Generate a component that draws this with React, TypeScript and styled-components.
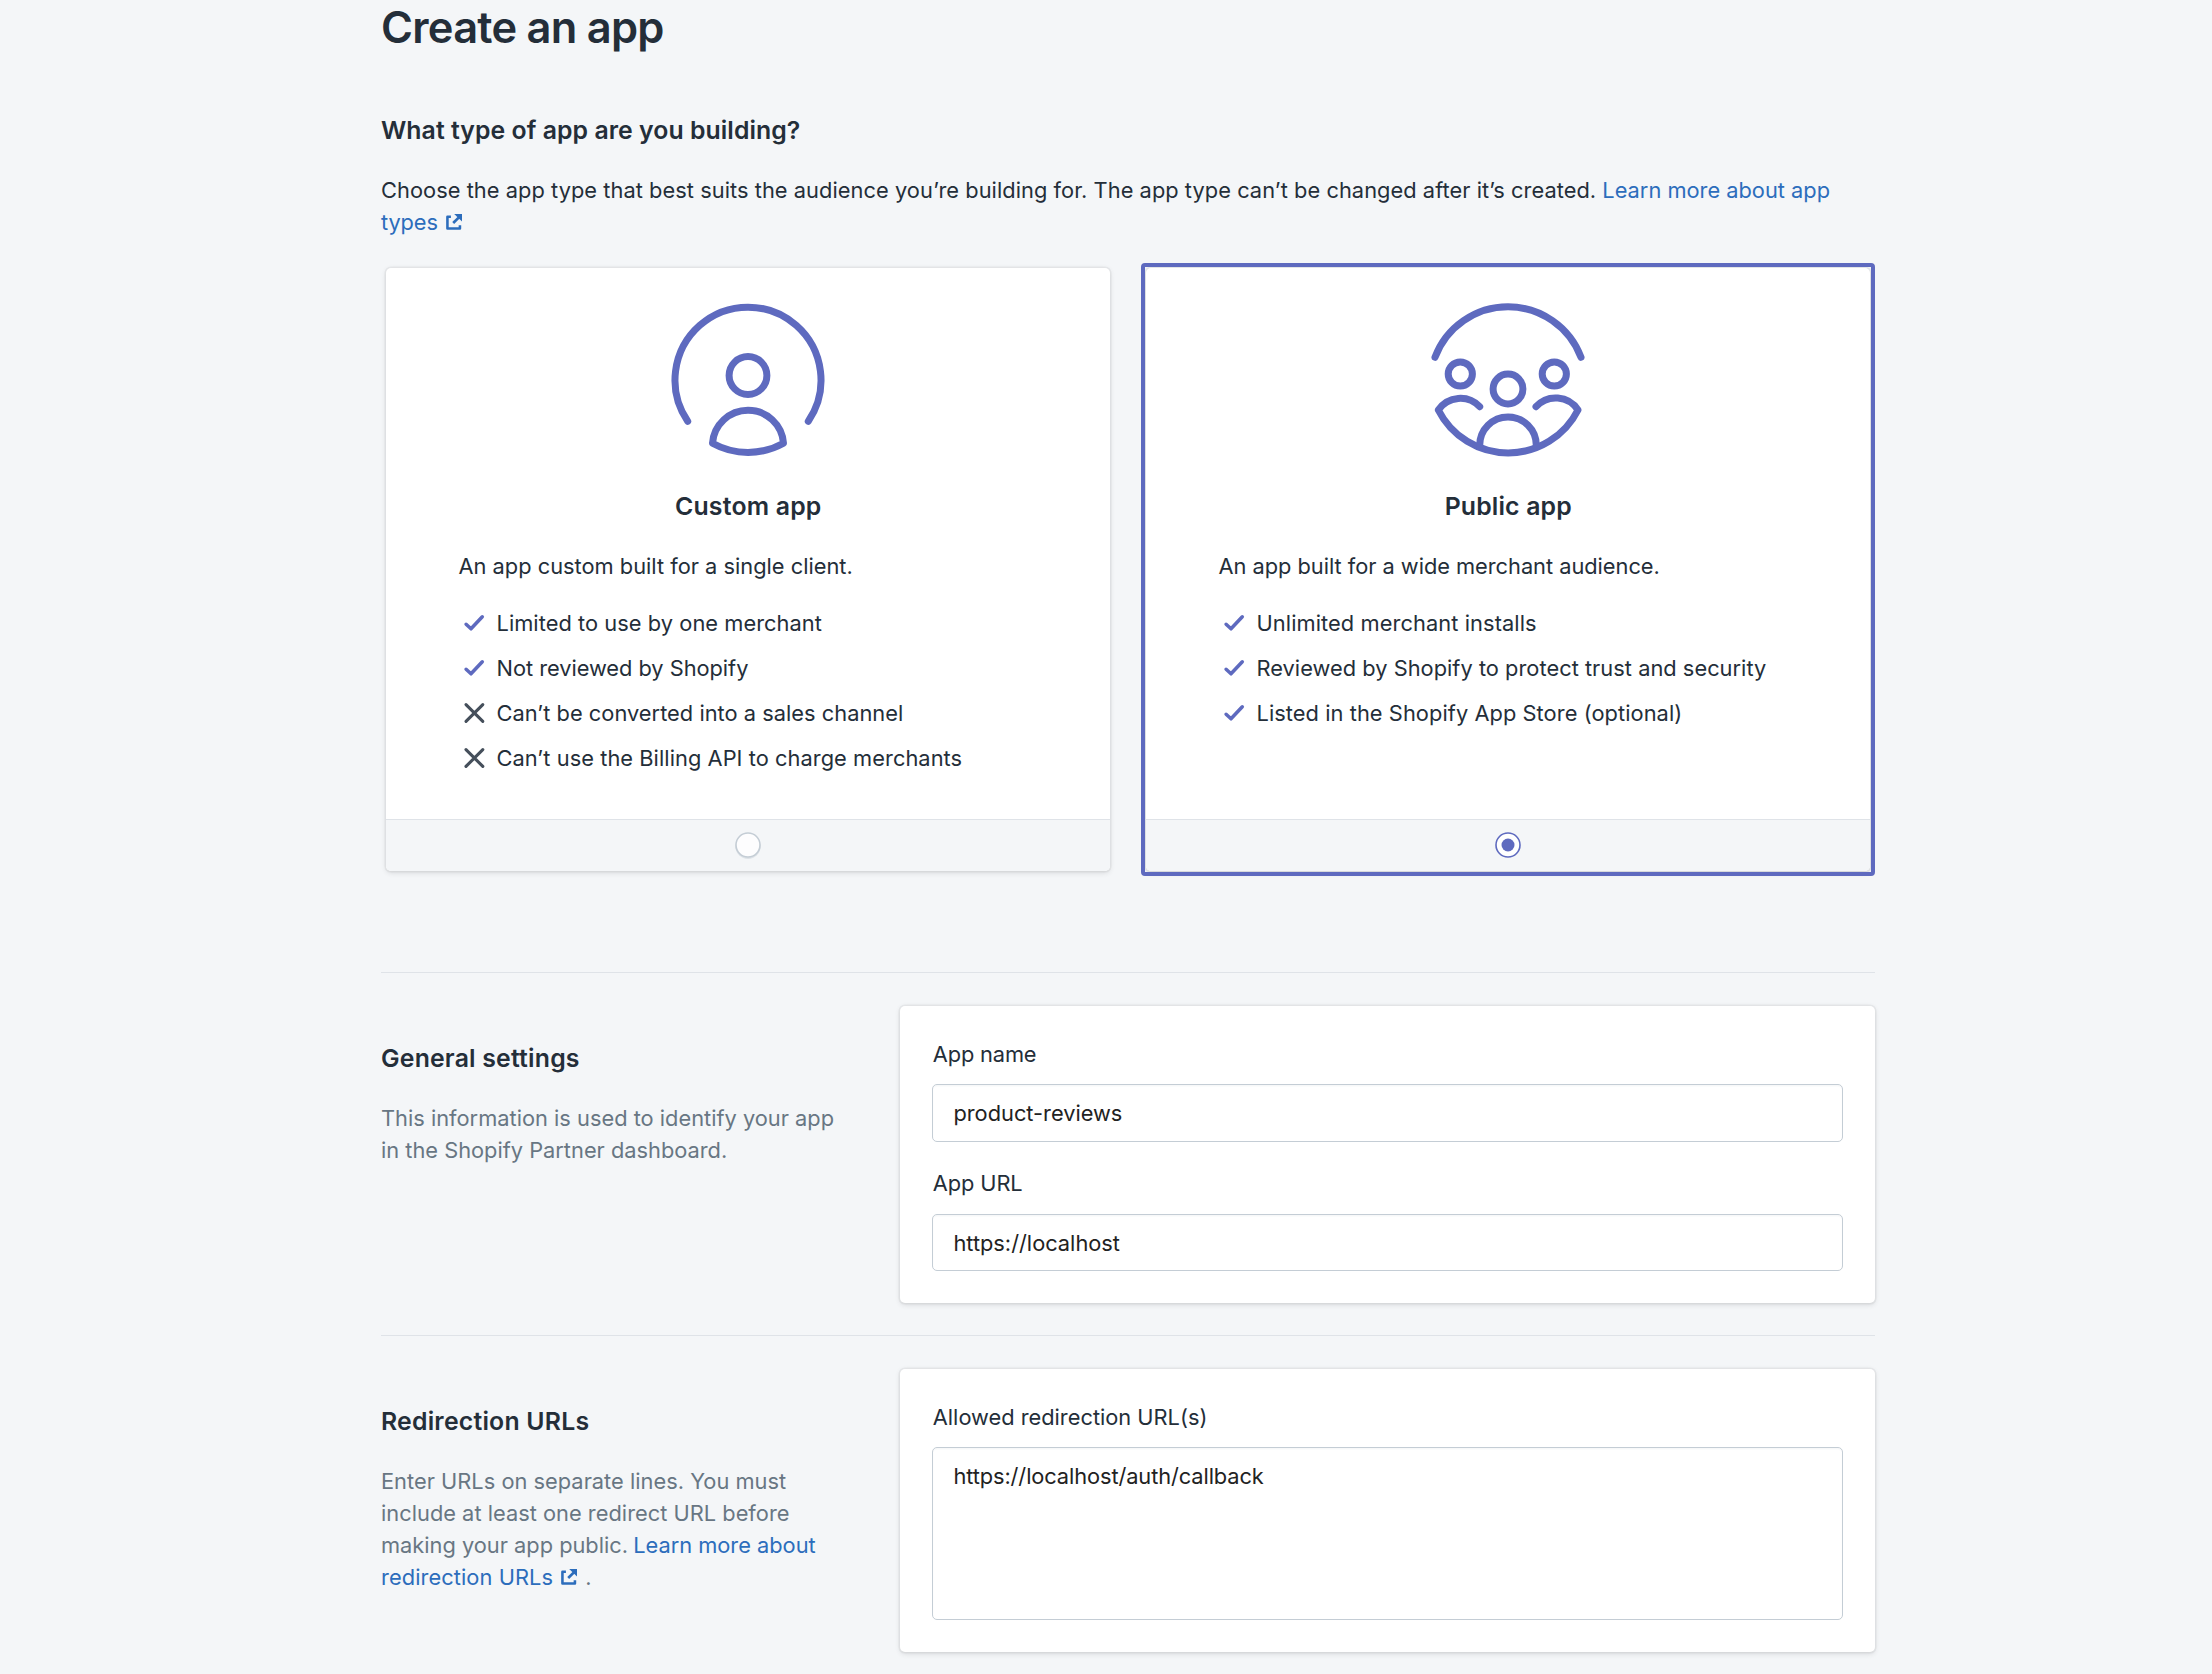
import React from 'react';
import styled, { createGlobalStyle, css } from 'styled-components';

const color = {
  page: '#f4f6f8',
  ink: '#242e39',
  subdued: '#687683',
  link: '#2c6dbc',
  indigo: '#5e6abf',
  line: '#dfe3e8',
  control: '#c4cdd5',
  cross: '#454f5b',
};

const GlobalStyle = createGlobalStyle`
  html, body {
    margin: 0;
    background: ${color.page};
  }
  body {
    height: 1674px;
    overflow: hidden;
    color: ${color.ink};
    font-family: Inter, "Noto Sans", sans-serif;
    font-size: 21.8px;
    line-height: 32px;
    -webkit-font-smoothing: antialiased;
  }
  *, *::before, *::after { box-sizing: border-box; }
`;

const Page = styled.main`
  width: 1494px;
  margin: 1px 0 0 381px;
`;

const Title = styled.h1`
  margin: 0 0 58px;
  font-size: 43.4px;
  font-weight: 600;
  line-height: 52px;
  letter-spacing: -0.73px;
`;

const Heading = styled.h2<{ $track?: number; $center?: boolean }>`
  margin: 0 0 25px;
  font-size: 24.8px;
  font-weight: 600;
  line-height: 38px;
  letter-spacing: ${(p) => p.$track ?? 0}px;
  text-align: ${(p) => (p.$center ? 'center' : 'left')};
`;

const Paragraph = styled.p<{ $subdued?: boolean }>`
  margin: 0;
  color: ${(p) => (p.$subdued ? color.subdued : color.ink)};
`;

const Line = styled.span<{ $track?: number }>`
  display: block;
  white-space: nowrap;
  letter-spacing: ${(p) => p.$track ?? 0}px;
`;

const Link = styled.a<{ $track?: number; $pull?: number }>`
  color: ${color.link};
  text-decoration: none;
  letter-spacing: ${(p) => p.$track ?? 0}px;
  margin-left: ${(p) => p.$pull ?? 0}px;
`;

const ExternalSvg = styled.svg`
  width: 16.4px;
  height: 16px;
  margin: 0 1.6px 0 8px;
  vertical-align: baseline;
`;

const surface = css`
  background: #fff;
  border-radius: 5px;
  box-shadow: 0 0 0 1.6px rgba(63, 63, 68, 0.05), 0 1.6px 4.8px rgba(63, 63, 68, 0.15);
`;

const Options = styled.div`
  display: grid;
  grid-template-columns: 724px 724px;
  column-gap: 36px;
  margin: 30px 5px 101px;
`;

const Option = styled.label<{ $selected?: boolean }>`
  ${surface}
  position: relative;
  display: flex;
  flex-direction: column;
  height: 603px;

  ${(p) =>
    p.$selected &&
    css`
      &::after {
        content: '';
        position: absolute;
        inset: -5px;
        border: 4px solid ${color.indigo};
        border-radius: 4px;
      }
    `}
`;

const OptionBody = styled.div`
  flex: 1;
  padding: 32px 72px 0 72.5px;
`;

const Illustration = styled.svg`
  display: block;
  width: 156px;
  height: 160px;
  margin: 0 auto 27px;
  fill: none;
  stroke: ${color.indigo};
  stroke-width: 7;
  stroke-linecap: round;
  stroke-linejoin: round;
`;

const OptionFooter = styled.div`
  display: flex;
  align-items: flex-start;
  justify-content: center;
  height: 52px;
  padding-top: 12px;
  border-top: 1px solid ${color.line};
  border-radius: 0 0 5px 5px;
  background: ${color.page};
`;

const RadioSvg = styled.svg`
  width: 28px;
  height: 28px;
`;

const HiddenRadio = styled.input`
  appearance: none;
  width: 0;
  height: 0;
  margin: 0;
`;

const Features = styled.ul`
  display: flex;
  flex-direction: column;
  gap: 13px;
  margin: 25px 0 0;
  padding: 0;
  list-style: none;
`;

const Feature = styled.li`
  display: flex;
  gap: 6px;
`;

const FeatureSvg = styled.svg<{ $positive: boolean }>`
  width: 32px;
  height: 32px;
  fill: none;
  stroke: ${(p) => (p.$positive ? color.indigo : color.cross)};
  stroke-width: ${(p) => (p.$positive ? 3.5 : 3.1)};
  stroke-linecap: round;
  stroke-linejoin: round;
`;

const Section = styled.section`
  display: grid;
  grid-template-columns: 519px 975px;
  align-items: start;
  padding: 33px 0 32px;
  border-top: 1px solid ${color.line};
`;

const Annotation = styled.div`
  padding-top: 33px;
`;

const Card = styled.div`
  ${surface}
  display: flex;
  flex-direction: column;
  gap: 25.2px;
  padding: 32px;
`;

const Field = styled.label`
  display: flex;
  flex-direction: column;
  gap: 14.4px;
`;

const Label = styled.span<{ $track?: number }>`
  padding-left: 0.8px;
  letter-spacing: ${(p) => p.$track ?? 0}px;
`;

const control = css<{ $track?: number }>`
  width: 911px;
  margin: 0;
  border: 1px solid ${color.control};
  border-radius: 5px;
  background: #fff;
  box-shadow: inset 0 1.6px 1px rgba(99, 115, 129, 0.05);
  color: #222;
  font: inherit;
  letter-spacing: ${(p) => p.$track ?? 0}px;
  outline: none;
`;

const Input = styled.input<{ $track?: number; $drop?: number }>`
  ${control}
  height: 57.6px;
  padding: ${(p) => p.$drop ?? 0}px 20.4px 0;
`;

const TextArea = styled.textarea<{ $track?: number }>`
  ${control}
  display: block;
  height: 173px;
  margin-top: -0.6px;
  padding: 12.3px 20.4px;
  resize: none;
`;

const ExternalIcon = () => (
  <ExternalSvg viewBox="0 0 16 16" preserveAspectRatio="none">
    <path d="M4.8 2.8H1.4V14.6H13.6V11.2" fill="none" stroke={color.link} strokeWidth="2.5" strokeLinejoin="round" />
    <path d="M8 0H16V8Z" fill={color.link} />
    <path d="M13.6 2.4 7 9" stroke={color.link} strokeWidth="2.6" />
  </ExternalSvg>
);

const Radio = ({ checked = false }: { checked?: boolean }) => (
  <>
    <HiddenRadio type="radio" name="appType" defaultChecked={checked} />
    <RadioSvg viewBox="0 0 28 28">
      {!checked && <circle cx="14" cy="14.4" r="12.6" fill="#dde2e7" />}
      <circle
        cx="14"
        cy="13"
        r="12"
        fill={checked ? '#fff' : '#fdfdfe'}
        stroke={checked ? color.indigo : color.control}
        strokeWidth="1.6"
      />
      {checked && <circle cx="14" cy="13" r="6.5" fill={color.indigo} />}
    </RadioSvg>
  </>
);

const CustomIllustration = () => (
  <Illustration viewBox="20 10 156 160">
    <path d="M37.7 131.3A73 73 0 1 1 158.3 131.3" />
    <circle cx="98" cy="85.5" r="18.9" />
    <path d="M62.5 153.2A35.6 35.6 0 0 1 133.5 153.2A73 73 0 0 1 62.5 153.2Z" />
  </Illustration>
);

const PublicIllustration = () => (
  <Illustration viewBox="20 10 156 160">
    <path d="M25 67.3A78 78 0 0 1 171 67.3" />
    <circle cx="50.3" cy="84" r="12.1" />
    <circle cx="144.3" cy="84" r="12.1" />
    <circle cx="98" cy="99" r="14.9" />
    <path d="M69.7 116.7A26.6 26.6 0 0 0 28.3 120A78.3 78.3 0 0 0 168 120A26.6 26.6 0 0 0 126 116.7" />
    <path d="M69.7 156.5V155.2A28.3 28.3 0 0 1 126.3 155.2V156.5" />
  </Illustration>
);

const FeatureIcon = ({ positive }: { positive: boolean }) => (
  <FeatureSvg $positive={positive} viewBox="0 0 32 32">
    <path d={positive ? 'M7.1 17.3 12 21.8 23.3 9.8' : 'M7 7.6 23.8 24.4M23.8 7.6 7 24.4'} />
  </FeatureSvg>
);

type FeatureData = { text: string; positive: boolean; track: number };

const customFeatures: FeatureData[] = [
  { text: 'Limited to use by one merchant', positive: true, track: 0.058 },
  { text: 'Not reviewed by Shopify', positive: true, track: -0.03 },
  { text: 'Can’t be converted into a sales channel', positive: false, track: 0.03 },
  { text: 'Can’t use the Billing API to charge merchants', positive: false, track: 0.06 },
];

const publicFeatures: FeatureData[] = [
  { text: 'Unlimited merchant installs', positive: true, track: 0.09 },
  { text: 'Reviewed by Shopify to protect trust and security', positive: true, track: 0.031 },
  { text: 'Listed in the Shopify App Store (optional)', positive: true, track: 0.07 },
];

const FeatureList = ({ items }: { items: FeatureData[] }) => (
  <Features>
    {items.map((f) => (
      <Feature key={f.text}>
        <FeatureIcon positive={f.positive} />
        <Line $track={f.track}>{f.text}</Line>
      </Feature>
    ))}
  </Features>
);

export default function App() {
  return (
    <>
      <GlobalStyle />
      <Page>
        <Title>Create an app</Title>
        <Heading $track={0.06}>What type of app are you building?</Heading>
        <Paragraph>
          <Line $track={0.054}>
            Choose the app type that best suits the audience you’re building for. The app type can’t be changed after
            it’s created. <Link href="#">Learn more about app</Link>
          </Line>
          <Line>
            <Link href="#" $track={-0.1}>
              types
              <ExternalIcon />
            </Link>
          </Line>
        </Paragraph>

        <Options>
          <Option>
            <OptionBody>
              <CustomIllustration />
              <Heading $center $track={0.22}>Custom app</Heading>
              <Line $track={0.01}>An app custom built for a single client.</Line>
              <FeatureList items={customFeatures} />
            </OptionBody>
            <OptionFooter>
              <Radio />
            </OptionFooter>
          </Option>
          <Option $selected>
            <OptionBody>
              <PublicIllustration />
              <Heading $center $track={0.16}>Public app</Heading>
              <Line $track={-0.02}>An app built for a wide merchant audience.</Line>
              <FeatureList items={publicFeatures} />
            </OptionBody>
            <OptionFooter>
              <Radio checked />
            </OptionFooter>
          </Option>
        </Options>

        <Section>
          <Annotation>
            <Heading $track={0.2}>General settings</Heading>
            <Paragraph $subdued>
              <Line $track={0.01}>This information is used to identify your app</Line>
              <Line>in the Shopify Partner dashboard.</Line>
            </Paragraph>
          </Annotation>
          <Card>
            <Field>
              <Label $track={-0.15}>App name</Label>
              <Input type="text" defaultValue="product-reviews" />
            </Field>
            <Field>
              <Label $track={-0.1}>App URL</Label>
              <Input type="text" defaultValue="https://localhost" $drop={1.4} />
            </Field>
          </Card>
        </Section>

        <Section>
          <Annotation>
            <Heading $track={0.22}>Redirection URLs</Heading>
            <Paragraph $subdued>
              <Line $track={0.022}>Enter URLs on separate lines. You must</Line>
              <Line $track={0.02}>include at least one redirect URL before</Line>
              <Line>
                making your app public. <Link href="#" $pull={-1}>Learn more about</Link>
              </Line>
              <Line>
                <Link href="#" $track={0.08}>
                  redirection URLs
                  <ExternalIcon />
                </Link>{' '}
                .
              </Line>
            </Paragraph>
          </Annotation>
          <Card>
            <Field>
              <Label>Allowed redirection URL(s)</Label>
              <TextArea defaultValue="https://localhost/auth/callback" $track={-0.09} spellCheck={false} />
            </Field>
          </Card>
        </Section>
      </Page>
    </>
  );
}
